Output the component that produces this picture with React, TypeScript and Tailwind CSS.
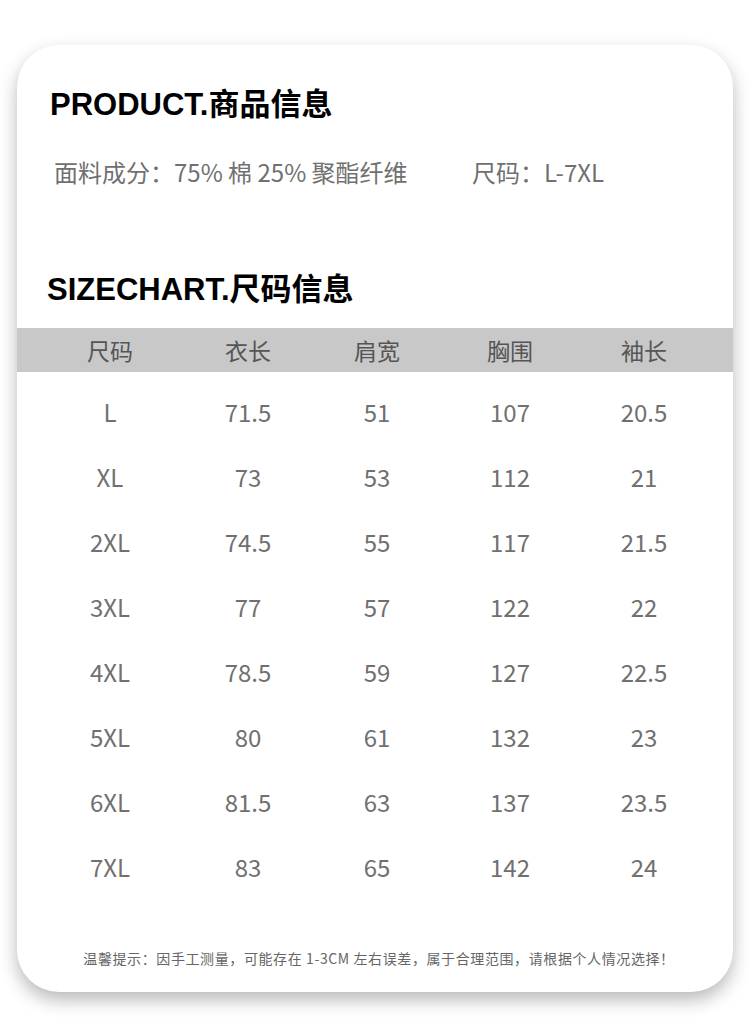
import React from "react";

const cjk = { fontFamily: '"Noto Sans CJK SC", "Noto Sans", sans-serif' };
const heading = { fontFamily: '"Liberation Sans", "Noto Sans CJK SC", sans-serif' };

const columns = ["尺码", "衣长", "肩宽", "胸围", "袖长"];

const rows = [
  ["L", "71.5", "51", "107", "20.5"],
  ["XL", "73", "53", "112", "21"],
  ["2XL", "74.5", "55", "117", "21.5"],
  ["3XL", "77", "57", "122", "22"],
  ["4XL", "78.5", "59", "127", "22.5"],
  ["5XL", "80", "61", "132", "23"],
  ["6XL", "81.5", "63", "137", "23.5"],
  ["7XL", "83", "65", "142", "24"],
];

// column widths picked so each column's centre sits where the reference has it
const grid = "grid grid-cols-[140px_136px_122px_144px_124px] pl-[23px]";

export default function App() {
  return (
    <div className="w-[750px] h-[1018px] bg-white overflow-hidden pt-[45px] px-[17px]" style={cjk}>
      <div className="h-[947px] bg-white rounded-[42px] shadow-[0_8px_18px_rgba(0,0,0,0.28)] flex flex-col overflow-hidden">
        <h1 className="mt-[42px] ml-[33px] text-[31px] leading-[36px] font-bold text-black" style={heading}>
          PRODUCT.商品信息
        </h1>
        <div className="mt-[34px] ml-[37px] flex text-[24px] leading-[30px] text-[#707070]">
          <span className="w-[418px]">面料成分：75% 棉 25% 聚酯纤维</span>
          <span>尺码：L-7XL</span>
        </div>

        <h2 className="mt-[85px] ml-[30px] text-[31px] leading-[36px] font-bold text-black" style={heading}>
          SIZECHART.尺码信息
        </h2>

        <div className={`${grid} mt-[20px] h-[44px] items-center bg-[#c8c8c8] text-[23px] text-[#555555]`}>
          {columns.map((c) => (
            <div key={c} className="text-center leading-[44px]">{c}</div>
          ))}
        </div>

        <div className="pt-[7px]">
          {rows.map((r, i) => (
            <div key={i} className={`${grid} h-[65px] items-center text-[24px] text-[#707070]`}>
              {r.map((v, j) => (
                <div key={j} className="text-center leading-[30px]">{v}</div>
              ))}
            </div>
          ))}
        </div>

        <p className="mt-[49px] pl-[8px] text-center text-[14px] leading-[20px] text-[#666666] tracking-[0.6px]">
          温馨提示：因手工测量，可能存在 1-3CM 左右误差，属于合理范围，请根据个人情况选择！
        </p>
      </div>
    </div>
  );
}
